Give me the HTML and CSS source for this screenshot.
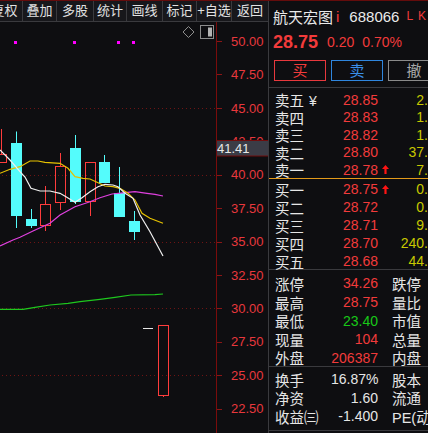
FILE: index.html
```html
<!DOCTYPE html>
<html lang="zh-CN">
<head>
<meta charset="utf-8">
<title>航天宏图 688066</title>
<link rel="stylesheet" href="styles.css">
</head>
<body>
<div class="screen">
  <div class="left">
    <div class="toolbar">
      <div class="tb">复权</div>
      <div class="tb">叠加</div>
      <div class="tb">多股</div>
      <div class="tb">统计</div>
      <div class="tb">画线</div>
      <div class="tb">标记</div>
      <div class="tb">+自选</div>
      <div class="tb">返回</div>
    </div>
    <svg class="chart" width="268" height="411" viewBox="0 22 268 411" xmlns="http://www.w3.org/2000/svg">
      <!-- grid -->
      <g stroke="#6e1414" stroke-width="1" stroke-dasharray="1 3">
        <line x1="2" y1="108.5" x2="215" y2="108.5"/>
        <line x1="2" y1="175.5" x2="215" y2="175.5"/>
        <line x1="2" y1="242.5" x2="215" y2="242.5"/>
        <line x1="2" y1="308.5" x2="215" y2="308.5"/>
        <line x1="2" y1="375.5" x2="215" y2="375.5"/>
      </g>
      <!-- top icons -->
      <path d="M188.5 26.5 L194 32 L188.5 37.5 L183 32 Z" fill="none" stroke="#8c8c8c" stroke-width="1"/>
      <rect x="200.5" y="25.5" width="13" height="13" fill="none" stroke="#8c8c8c" stroke-width="1"/>
      <rect x="208" y="27.5" width="4" height="9" fill="#b4b4b4"/>
      <!-- markers -->
      <g fill="#ff00ff">
        <rect x="14" y="41" width="3" height="3"/>
        <rect x="73" y="41" width="3" height="3"/>
        <rect x="117" y="41" width="3" height="3"/>
        <rect x="132" y="41" width="3" height="3"/>
      </g>
      <!-- candles: cyan (falling) -->
      <g stroke="#54fcfc" stroke-width="1">
        <line x1="16.5" y1="131.5" x2="16.5" y2="228"/>
        <line x1="31.5" y1="209" x2="31.5" y2="228"/>
        <line x1="75.5" y1="135" x2="75.5" y2="204"/>
        <line x1="104.5" y1="155" x2="104.5" y2="162"/>
        <line x1="119.5" y1="167" x2="119.5" y2="194"/>
        <line x1="134.5" y1="211" x2="134.5" y2="240"/>
      </g>
      <g fill="#54fcfc">
        <rect x="11" y="143" width="11" height="73"/>
        <rect x="26" y="219" width="11" height="7"/>
        <rect x="70" y="148" width="11" height="54"/>
        <rect x="99" y="162" width="11" height="21"/>
        <rect x="114" y="193" width="11" height="24"/>
        <rect x="129" y="221" width="11" height="11"/>
      </g>
      <!-- candles: red hollow (rising) -->
      <g stroke="#ff3c3c" stroke-width="1" fill="none">
        <line x1="1.5" y1="129" x2="1.5" y2="154"/>
        <rect x="-4.5" y="154.5" width="11" height="8"/>
        <line x1="45.5" y1="186" x2="45.5" y2="204.5"/>
        <line x1="45.5" y1="225.5" x2="45.5" y2="231"/>
        <rect x="40.5" y="204.5" width="10" height="21"/>
        <line x1="60.5" y1="153" x2="60.5" y2="166.5"/>
        <line x1="60.5" y1="202.5" x2="60.5" y2="210"/>
        <rect x="55.5" y="166.5" width="10" height="36"/>
        <line x1="90.5" y1="201.5" x2="90.5" y2="216"/>
        <rect x="85.5" y="162.5" width="10" height="39"/>
        <line x1="163.5" y1="395.5" x2="163.5" y2="397"/>
        <rect x="158.5" y="325.5" width="10" height="70"/>
      </g>
      <line x1="143" y1="328.5" x2="153" y2="328.5" stroke="#e6e6e6" stroke-width="1"/>
      <!-- moving averages -->
      <polyline fill="none" stroke="#1ec81e" stroke-width="1.2" points="0,309.3 23,309.3 35,307.3 50,305 68,303.3 80,301.7 100,299.3 115,297.3 131,295 155,294.7 163,294"/>
      <polyline fill="none" stroke="#e040e0" stroke-width="1.2" points="0,246 13,240 20,237.3 33,231 50,223.3 60,215 75,206.7 90,201.7 100,197.7 112,194 125,192.7 135,191.7 147,193.3 155,194.3 163,196"/>
      <polyline fill="none" stroke="#e6c200" stroke-width="1.2" points="0,173.3 10,169.3 20,166.7 30,161 38,161 45,162.3 60,163.3 68,168.3 75,176.7 83,178.3 90,179 97,182.3 105,186 113,186.7 120,188.3 128,193.3 135,200 142,213.3 150,218.3 163,223.3"/>
      <polyline fill="none" stroke="#f0f0f0" stroke-width="1.2" points="0,150 10,160 20,171.7 25,177 31,188.3 40,191 50,191 60,193.3 66,196.7 75,202.3 82,197.7 90,191.7 98,186.7 105,184.3 113,185 118,186.7 125,193.3 133,198.3 140,215 150,231.7 163,256"/>
      <!-- price axis -->
      <line x1="216.5" y1="22" x2="216.5" y2="433" stroke="#7a0c0c" stroke-width="1"/>
      <g stroke="#8a1616" stroke-width="1">
        <line x1="217" y1="41.5" x2="222" y2="41.5"/>
        <line x1="217" y1="74.5" x2="222" y2="74.5"/>
        <line x1="217" y1="108.5" x2="222" y2="108.5"/>
        <line x1="217" y1="175.5" x2="222" y2="175.5"/>
        <line x1="217" y1="208.5" x2="222" y2="208.5"/>
        <line x1="217" y1="242.5" x2="222" y2="242.5"/>
        <line x1="217" y1="275.5" x2="222" y2="275.5"/>
        <line x1="217" y1="308.5" x2="222" y2="308.5"/>
        <line x1="217" y1="342.5" x2="222" y2="342.5"/>
        <line x1="217" y1="375.5" x2="222" y2="375.5"/>
        <line x1="217" y1="409.5" x2="222" y2="409.5"/>
      </g>
      <g class="axis-text">
        <text x="231" y="45.7">50.00</text>
        <text x="231" y="79">47.50</text>
        <text x="231" y="112.5">45.00</text>
        <text x="231" y="145.9">42.50</text>
        <text x="231" y="179.3">40.00</text>
        <text x="231" y="212.7">37.50</text>
        <text x="231" y="246.2">35.00</text>
        <text x="231" y="279.6">32.50</text>
        <text x="231" y="313">30.00</text>
        <text x="231" y="346.4">27.50</text>
        <text x="231" y="379.9">25.00</text>
        <text x="231" y="413.3">22.50</text>
      </g>
      <rect x="216.5" y="140.5" width="52" height="15.5" fill="#3b3c46" stroke="#6e0c0c" stroke-width="1"/>
      <text class="cur-text" x="217" y="153">41.41</text>
    </svg>
  </div>

  <div class="panel">
    <div class="top">
      <div class="head">
        <span class="name">航天宏图</span><span class="red i">i</span><span class="code">688066</span><span class="red lk">LK</span>
      </div>
      <div class="quote">
        <span class="red last">28.75</span><span class="red chg">0.20</span><span class="red pct">0.70%</span>
      </div>
      <div class="btns">
        <div class="btn buy">买</div>
        <div class="btn sell">卖</div>
        <div class="btn cancel">撤</div>
      </div>
    </div>

    <div class="book asks">
      <div class="row"><span class="lb">卖五<span class="yen">¥</span></span><span class="val red">28.85</span><span class="ar"></span><span class="vol">2.</span></div>
      <div class="row"><span class="lb">卖四</span><span class="val red">28.83</span><span class="ar"></span><span class="vol">1.</span></div>
      <div class="row"><span class="lb">卖三</span><span class="val red">28.82</span><span class="ar"></span><span class="vol">1.</span></div>
      <div class="row"><span class="lb">卖二</span><span class="val red">28.80</span><span class="ar"></span><span class="vol">37.</span></div>
      <div class="row"><span class="lb">卖一</span><span class="val red">28.78</span><span class="ar"><svg width="7" height="9" viewBox="0 0 7 9"><polygon points="3.5,0 7,4 4.6,4 4.6,9 2.4,9 2.4,4 0,4" fill="#ff1414"/></svg></span><span class="vol">7.</span></div>
    </div>
    <div class="book bids">
      <div class="row"><span class="lb">买一</span><span class="val red">28.75</span><span class="ar"><svg width="7" height="9" viewBox="0 0 7 9"><polygon points="3.5,0 7,4 4.6,4 4.6,9 2.4,9 2.4,4 0,4" fill="#ff1414"/></svg></span><span class="vol">0.</span></div>
      <div class="row"><span class="lb">买二</span><span class="val red">28.72</span><span class="ar"></span><span class="vol">0.</span></div>
      <div class="row"><span class="lb">买三</span><span class="val red">28.71</span><span class="ar"></span><span class="vol">9.</span></div>
      <div class="row"><span class="lb">买四</span><span class="val red">28.70</span><span class="ar"></span><span class="vol">240.</span></div>
      <div class="row"><span class="lb">买五</span><span class="val red">28.68</span><span class="ar"></span><span class="vol">44.</span></div>
    </div>

    <div class="stats s1">
      <div class="row"><span class="lb">涨停</span><span class="val red">34.26</span><span class="ar"></span><span class="lb2">跌停</span></div>
      <div class="row"><span class="lb">最高</span><span class="val red">28.75</span><span class="ar"></span><span class="lb2">量比</span></div>
      <div class="row"><span class="lb">最低</span><span class="val green">23.40</span><span class="ar"></span><span class="lb2">市值</span></div>
      <div class="row"><span class="lb">现量</span><span class="val red">104</span><span class="ar"></span><span class="lb2">总量</span></div>
      <div class="row"><span class="lb">外盘</span><span class="val red">206387</span><span class="ar"></span><span class="lb2">内盘</span></div>
    </div>
    <div class="stats s2">
      <div class="row"><span class="lb">换手</span><span class="val white">16.87%</span><span class="ar"></span><span class="lb2">股本</span></div>
      <div class="row"><span class="lb">净资</span><span class="val white">1.60</span><span class="ar"></span><span class="lb2">流通</span></div>
      <div class="row"><span class="lb">收益㈢</span><span class="val white">-1.400</span><span class="ar"></span><span class="lb2">PE(动态)</span></div>
    </div>
  </div>
</div>
</body>
</html>
```

FILE: styles.css
```css
html, body {
  margin: 0;
  padding: 0;
}
body {
  width: 428px;
  height: 433px;
  overflow: hidden;
  background: #0e0e11;
  border-top: 1px solid #640c0c;
  box-sizing: border-box;
  font-family: "Liberation Sans", "Noto Sans CJK SC", sans-serif;
  color: #e6e6e6;
}
.screen {
  display: flex;
  height: 432px;
}
.left {
  width: 268px;
  flex: none;
  overflow: hidden;
}
.toolbar {
  display: flex;
  height: 21px;
  box-sizing: border-box;
  background: #17171b;
  border-bottom: 1px solid #3a3a3e;
  overflow: hidden;
}
.tb {
  flex: none;
  box-sizing: border-box;
  height: 20px;
  line-height: 20px;
  text-align: center;
  font-size: 13px;
  color: #e2e2e2;
  border-right: 1px solid #3a3a3e;
  white-space: nowrap;
}
.tb:nth-child(1) { width: 36px; margin-left: -13px; }
.tb:nth-child(2) { width: 34px; }
.tb:nth-child(3) { width: 37px; }
.tb:nth-child(4) { width: 33px; }
.tb:nth-child(5) { width: 36px; }
.tb:nth-child(6) { width: 34px; }
.tb:nth-child(7) { width: 35px; }
.tb:nth-child(8) { width: 36px; border-right: none; }

.chart {
  display: block;
}
.axis-text text {
  font-family: "Liberation Sans", sans-serif;
  font-size: 13px;
  fill: #e8383d;
}
.cur-text {
  font-family: "Liberation Sans", sans-serif;
  font-size: 13px;
  fill: #e8e8e8;
}

.panel {
  width: 160px;
  flex: none;
  box-sizing: border-box;
  border-left: 1px solid #3a3a3e;
  overflow: hidden;
}
.red { color: #f23b3b; }
.green { color: #18c818; }
.white { color: #e6e6e6; }

.top {
  height: 86px;
  border-bottom: 1px solid #3a3a3e;
}
.head {
  height: 30px;
  display: flex;
  align-items: center;
  padding-left: 4px;
  font-size: 15px;
  white-space: nowrap;
}
.name { color: #eaeaea; }
.i { margin-left: 3px; }
.code { margin-left: 10px; color: #eaeaea; }
.lk { margin-left: 7px; font-size: 12px; letter-spacing: 5px; }
.quote {
  height: 22px;
  display: flex;
  align-items: center;
  padding-left: 4px;
  white-space: nowrap;
}
.last { font-size: 18px; font-weight: bold; }
.chg { font-size: 14px; margin-left: 9px; }
.pct { font-size: 14px; margin-left: 8px; }
.btns {
  display: flex;
  gap: 5px;
  margin-top: 7px;
  padding-left: 5px;
}
.btn {
  flex: none;
  width: 52px;
  height: 21px;
  box-sizing: border-box;
  line-height: 19px;
  text-align: center;
  font-size: 15px;
}
.buy { border: 1px solid #e8383d; color: #f23b3b; }
.sell { border: 1px solid #2f86de; color: #3a8ee8; }
.cancel { border: 1px solid #8a8a8a; color: #a8a8a8; }

.book, .stats {
  padding-left: 6px;
}
.row {
  display: grid;
  grid-template-columns: 56px 47px 14px 36px;
  align-items: center;
  white-space: nowrap;
}
.asks {
  padding-top: 1px;
  padding-bottom: 1px;
  border-bottom: 1px solid #e39a1a;
}
.asks .row { height: 17.6px; }
.bids {
  border-bottom: 1px solid #3a3a3e;
}
.bids .row { height: 18px; }
.lb {
  font-size: 14.5px;
  color: #e6e6e6;
}
.yen { margin-left: 5px; font-size: 14px; }
.val {
  font-size: 14px;
  text-align: right;
}
.ar {
  display: flex;
  align-items: center;
  padding-left: 4px;
}
.ar svg { display: block; }
.vol {
  font-size: 14px;
  color: #c8c800;
  text-align: right;
}
.lb2 {
  font-size: 14.5px;
  color: #e6e6e6;
  overflow: hidden;
}
.s1 {
  padding-top: 3px;
  border-bottom: 1px solid #3a3a3e;
}
.s1 .row { height: 18.6px; }
.s2 {
  padding-top: 2px;
  padding-bottom: 6px;
  border-bottom: 1px solid #3a3a3e;
}
.s2 .row { height: 18.5px; }
```
